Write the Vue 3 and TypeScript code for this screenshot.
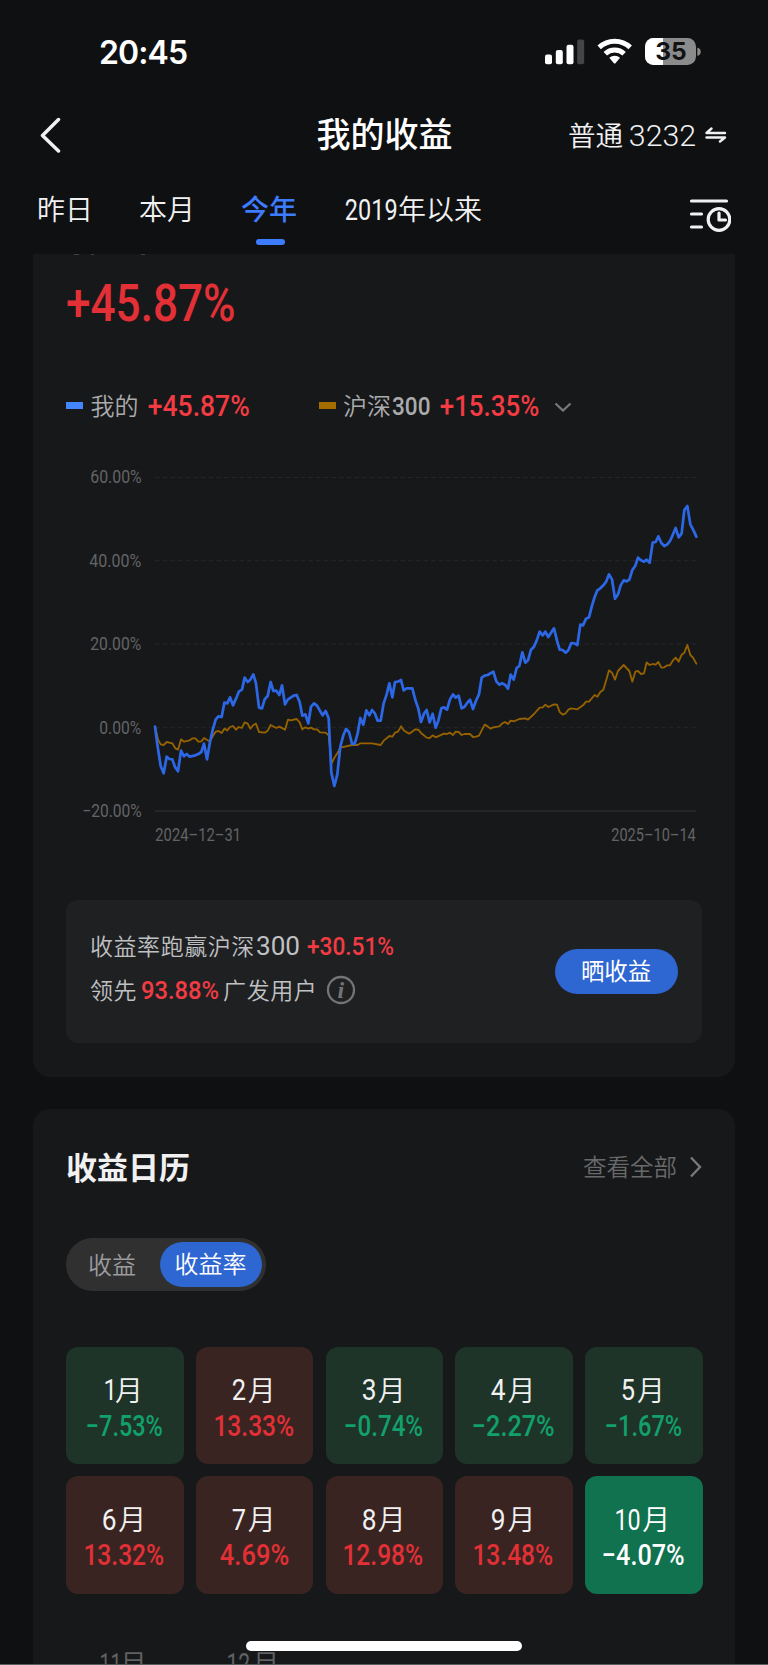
<script setup lang="ts">
import { h } from 'vue'

interface NumProps { t: string; w: number; c: number; b?: number }

// Condensed figures: w is the drawn width, c the cap height, b the weight.
// A leading or trailing "1" carries wider side bearings than the other digits.
const Num = (p: NumProps) => {
  const size = p.c / 0.711
  const lead = size * (p.t.startsWith('1') ? 0.09 : 0.04)
  const trail = size * (p.t.endsWith('1') ? 0.17 : 0.04)
  return h('svg', { width: p.w, height: p.c, style: { display: 'block', flex: 'none', overflow: 'visible' } }, [
    h('text', {
      x: -lead, y: p.c, fill: 'currentColor',
      'font-family': 'Roboto, sans-serif', 'font-size': size, 'font-weight': p.b ?? 400,
      textLength: p.w + lead + trail, lengthAdjust: 'spacingAndGlyphs',
    }, p.t),
  ])
}
Num.props = ['t', 'w', 'c', 'b']

const labels = [
  { t: '60.00%', w: 50 }, { t: '40.00%', w: 50.5 }, { t: '20.00%', w: 49.5 }, { t: '0.00%', w: 40.5 }, { t: '−20.00%', w: 58 },
]

const place = (dx: number, dy: number, pts: string) =>
  pts.trim().split(/\s+/).map((p) => {
    const [x, y] = p.split(',').map(Number)
    return `${x + dx},${y + dy}`
  }).join(' ')

const mine = place(-285, 487, `285,262 292,315 302,380 311,402 320,352 328,359 337,360 345,383 354,396 363,334 372,351 380,344 389,352 406,348 415,344 424,338 432,313 441,360 450,308 458,272 467,241 475,231 485,233 493,190 502,192 510,174 519,198 528,178 537,156 546,151 554,115 563,128 571,121 580,105 588,132 597,205 606,207 614,180 623,170 632,128 640,155 649,154 658,167 666,138 675,195 684,180 701,169 710,167 719,188 727,229 736,225 745,252 753,202 762,192 771,199 788,228 797,215 806,237 814,400 823,440 832,405 841,322 850,288 858,269 867,278 876,313 884,314 893,282 901,236 910,256 919,213 928,228 936,212 945,223 953,244 962,244 971,192 980,165 988,132`)
  + ' ' + place(705, 7, `7,654 15,608 24,607 33,602 41,633 50,627 67,627 76,662 85,688 93,728 102,703 110,692 119,729 128,703 137,745 145,724 154,687 162,684 171,691 180,660 189,645 197,655 206,649 215,687 223,683 232,670 240,661 249,689 258,664 267,645 275,595 284,589 293,587 310,577 319,606 328,616 336,612 345,616 354,628 362,586 371,601 380,566 388,560 397,519 406,550 414,543 423,511 432,502 440,484 449,457 458,468 466,457 475,473 484,459 492,447 501,484 509,511 518,512 527,520 535,513 544,491 553,492 562,497 571,436 579,438 588,418 597,414 606,379 614,353 622,333 631,327 640,318 649,306 657,285 666,300 675,358 684,345 692,318 701,303 710,306 718,301 727,272 736,259 744,235 753,243 762,247 770,241 779,250 788,190 797,188 805,171 814,191 823,200 832,195 840,185 849,165 857,146 866,174 875,162 883,92 892,80 901,135 909,150 919,172`)

const index = place(-285, 487, `285,262 294,300 302,315 311,317 320,308 337,312 346,327 354,331 363,300 372,307 389,303 398,297 406,297 415,307 424,306 432,296 450,307 458,291 467,277 476,275 485,281 493,268 502,273 510,263 519,260 528,271 536,263 545,266 554,249 563,253 571,268 580,257 588,253 597,278 614,280 623,274 632,257 649,266 658,262 675,271 684,241 692,243 710,239 719,249 727,270 736,264 745,268 753,265 762,270 771,270 780,279 797,280 806,288 815,372 823,355 832,342 841,325 858,321 876,317 893,317 901,312 936,312 962,317 971,304 988,290`)
  + ' ' + place(705, 7, `7,772 15,760 24,757 33,741 41,753 50,759 58,763 76,750 85,751 93,761 110,775 119,776 128,768 137,774 162,763 171,764 180,760 189,767 197,757 206,758 215,767 223,764 240,764 249,773 258,772 267,769 275,753 284,736 293,741 301,748 310,744 328,741 336,733 345,728 354,734 362,724 371,726 388,719 406,717 414,721 432,704 449,685 458,684 466,676 475,683 492,675 501,676 509,698 518,706 527,702 535,691 544,687 562,690 579,678 588,667 597,667 614,647 622,652 631,638 640,631 649,601 657,573 666,580 675,601 684,575 701,557 718,575 727,607 736,577 744,575 753,584 762,582 770,549 779,557 788,554 797,556 805,548 814,565 823,564 832,558 840,558 849,543 857,535 866,547 875,526 883,520 892,497 901,527 909,535 919,553`)

const months = [
  { m: '1', mw: 6, v: '−7.53%', w: 74.7, k: 'down' },
  { m: '2', mw: 12, v: '13.33%', w: 77, k: 'up' },
  { m: '3', mw: 12.5, v: '−0.74%', w: 77, k: 'down' },
  { m: '4', mw: 12.5, v: '−2.27%', w: 80.5, k: 'down' },
  { m: '5', mw: 12, v: '−1.67%', w: 75, k: 'down' },
  { m: '6', mw: 12.5, v: '13.32%', w: 77, k: 'up' },
  { m: '7', mw: 12, v: '4.69%', w: 67, k: 'up' },
  { m: '8', mw: 12.5, v: '12.98%', w: 77, k: 'up' },
  { m: '9', mw: 12.5, v: '13.48%', w: 77, k: 'up' },
  { m: '10', mw: 22.5, v: '−4.07%', w: 80.5, k: 'now' },
]
</script>

<template>
  <div class="screen">
    <div class="status">
      <span class="time">20:45</span>
      <svg class="sys" width="158" height="30" viewBox="0 0 158 30">
        <g fill="#fff">
          <rect x="1" y="17.5" width="7" height="9.7" rx="2" />
          <rect x="11.8" y="13" width="7" height="14.2" rx="2" />
          <rect x="22.5" y="7.8" width="7" height="19.4" rx="2" />
          <rect x="33.2" y="2.5" width="7" height="24.7" rx="2" fill="#454547" />
        </g>
        <g fill="none" stroke="#fff" stroke-width="5">
          <path d="M55.2 10.4a22.5 22.5 0 0 1 31 0" />
          <path d="M61.3 16.7a13.6 13.6 0 0 1 18.8 0" />
        </g>
        <path d="M65.3 20.8a8 8 0 0 1 10.8 0l-4.4 5.2q-1 1-2 0z" fill="#fff" />
        <clipPath id="batt"><rect x="101" y="1" width="51" height="27" rx="8.5" /></clipPath>
        <g clip-path="url(#batt)">
          <rect x="101" y="1" width="51" height="27" fill="#8b8b8c" />
          <rect x="101" y="1" width="18" height="27" fill="#fff" />
        </g>
        <path d="M153.3 10.6q3.4 1 3.4 4.2t-3.4 4.2z" fill="#8b8b8c" />
        <text x="127" y="23.3" text-anchor="middle" class="pct">35</text>
      </svg>
    </div>

    <header class="nav">
      <svg class="back" width="22" height="36" viewBox="0 0 22 36"><path d="M18.500 2.500 2.500 18.500l16 15.500" /></svg>
      <h1>我的收益</h1>
      <div class="account">
        <span>普通</span>
        <Num t="3232" :w="65" :c="20.7" :b="300" />
        <svg width="22" height="16" viewBox="0 0 22 16"><path d="M6.500 1.500 1.500 6h18.500M1.500 10.500h18.500L15 14.500" /></svg>
      </div>
    </header>

    <nav class="tabs">
      <span class="tab">昨日</span>
      <span class="tab">本月</span>
      <span class="tab on">今年</span>
      <span class="tab since"><Num t="2019" :w="50.500" :c="20.5" />年以来</span>
      <svg class="filter" width="42" height="34" viewBox="0 0 42 34">
        <path d="M2.500 3h35M2.500 16h10M2.500 29h10" />
        <circle cx="30" cy="21.500" r="10.800" />
        <path d="M30 15v7h6.500" />
      </svg>
    </nav>

    <section class="card first">
      <svg class="peek" width="80" height="2" viewBox="0 0 80 2"><path d="M8 .5h5M25 .5h3M75 .5h4" /></svg>
      <div class="total"><Num t="+45.87%" :w="165.5" :c="36.3" :b="500" /></div>

      <div class="legend">
        <i class="dash blue"></i><span class="cn name">我的</span>
        <Num class="red" t="+45.87%" :w="99.5" :c="21.5" :b="500" />
        <i class="dash gold"></i><span class="cn name">沪深</span>
        <Num class="n300" t="300" :w="36.5" :c="17.7" :b="500" />
        <Num class="red" t="+15.35%" :w="97" :c="21.5" :b="500" />
        <svg class="caret" width="18" height="10" viewBox="0 0 18 10"><path d="M1.500 1.500 9 8.500l7.500-7" /></svg>
      </div>

      <div class="chart">
        <div class="axis">
          <Num v-for="l in labels" :key="l.t" :t="l.t" :w="l.w" :c="12.8" />
        </div>
        <div class="plot">
          <svg class="curves" width="541" height="334.500" viewBox="0 0 1623 1003.500">
            <path class="grid" d="M0 1.500H1623M0 251H1623M0 501H1623M0 752H1623" />
            <path class="base" d="M0 1002H1623" />
            <polyline class="index" :points="index" />
            <polyline class="mine" :points="mine" />
          </svg>
          <div class="dates">
            <Num t="2024–12–31" :w="82" :c="12.8" />
            <Num t="2025–10–14" :w="83" :c="12.8" />
          </div>
        </div>
      </div>

      <div class="promo">
        <div>
          <div class="line">
            <span class="cn sp">收益率跑赢沪深</span><Num class="g" t="300" :w="42" :c="18" />
            <Num class="red l9" t="+30.51%" :w="85" :c="18.7" :b="500" />
          </div>
          <div class="line">
            <span class="cn sp">领先</span><Num class="red l5" t="93.88%" :w="76" :c="18.7" :b="500" />
            <span class="cn sp l5b">广发用户</span>
            <svg class="info" width="30" height="30" viewBox="0 0 30 30">
              <circle cx="15" cy="15" r="13" />
              <text x="14.800" y="22.500" text-anchor="middle">i</text>
            </svg>
          </div>
        </div>
        <button class="share">晒收益</button>
      </div>
    </section>

    <section class="card second">
      <div class="head">
        <h2>收益日历</h2>
        <span class="all">查看全部</span>
        <svg width="13" height="22" viewBox="0 0 13 22"><path d="M2 1.500 11 11l-9 9.500" /></svg>
      </div>
      <div class="toggle"><span class="off">收益</span><span class="sel">收益率</span></div>
      <div class="months">
        <div v-for="x in months" :key="x.m" class="tile" :class="x.k">
          <div class="mon"><Num :t="x.m" :w="x.mw" :c="20.5" /><span>月</span></div>
          <Num class="val" :t="x.v" :w="x.w" :c="20.5" :b="500" />
        </div>
        <div class="tile next"><div class="mon"><Num t="11" :w="14.500" :c="20.5" /><span>月</span></div></div>
        <div class="tile next"><div class="mon"><Num t="12" :w="20" :c="20.5" /><span>月</span></div></div>
      </div>
    </section>
    <div class="home"></div>
    <div class="edge"></div>
  </div>
</template>

<style>
body { margin: 0; background: #0f1012; }
</style>

<style scoped>
* { box-sizing: border-box; }
.screen { position: relative; width: 768px; height: 1665px; overflow: hidden; background: #0f1012; color: #f1f1f2; font-family: "Noto Sans CJK SC", sans-serif; }
svg { flex: none; display: block; }
.status { display: flex; height: 96px; padding: 37px 66px 0 99px; }
.time { flex: 1; font: 600 32px/32px Inter, sans-serif; letter-spacing: -.9px; color: #fff; }
.pct { font: 700 24.500px Inter, sans-serif; fill: #111214; }
.nav { display: flex; align-items: center; height: 78px; padding: 0 41px 0 40px; }
.back path { fill: none; stroke: #f1f1f2; stroke-width: 3.500; stroke-linecap: round; stroke-linejoin: round; }
h1 { flex: 1; margin: 0 0 0 254.500px; font-size: 34px; line-height: 40px; font-weight: 500; color: #fff; transform: translateY(-2px); }
.account { display: flex; align-items: center; font-size: 27.500px; line-height: 40px; font-weight: 350; }
.account span { width: 62px; transform: translateY(-1px); }
.account svg:last-child { margin-left: 10px; }
.account path { fill: none; stroke: #f1f1f2; stroke-width: 2.400; stroke-linecap: round; stroke-linejoin: round; }
.tabs { display: flex; height: 80px; padding: 14px 37px 0 37px; font-size: 28px; line-height: 40px; font-weight: 350; }
.tab { width: 102px; height: 40px; }
.on { position: relative; color: #3d7bff; font-weight: 500; width: 104.500px; }
.on::after { content: ""; position: absolute; left: 15px; top: 51px; width: 29px; height: 6px; border-radius: 3px; background: #3d7bff; }
.since { display: flex; align-items: center; flex: 1; gap: 2px; }
.since svg { margin-top: 2px; }
.filter { margin-top: 10px; }
.filter path, .filter circle { fill: none; stroke: #f1f1f2; stroke-width: 3.200; stroke-linecap: round; stroke-linejoin: round; }
.card { width: 702px; margin-left: 33px; padding: 0 33px; background: #17181a; }
.first { height: 822.500px; border-radius: 0 0 17px 17px; }
.peek path { stroke: #3f4043; stroke-width: 1; }
.total { margin-left: 2px; padding-top: 28.500px; height: 120px; color: #e23036; }
.legend { display: flex; align-items: center; height: 60px; }
.cn { font-weight: 350; white-space: nowrap; }
.name { font-size: 24px; line-height: 40px; color: #aaabad; width: 58.500px; transform: translateY(-1.500px); }
.gold + .name { width: 50px; }
.dash { width: 17px; height: 6.500px; margin: -1px 7.500px 0 0; }
.blue { background: #4486ff; }
.gold { background: #a56c00; margin-left: 70px; }
.red { color: #f23b42; }
.legend .red { margin-top: -3px; }
.n300 { color: #aaabad; margin: 0 11px 0 0; }
.caret { margin: 1px 0 0 16px; }
.caret path { fill: none; stroke: #77787a; stroke-width: 2.300; }
.chart { display: flex; margin-top: 41px; }
.axis { display: flex; flex-direction: column; align-items: flex-end; justify-content: space-between; width: 74.500px; height: 347px; margin: -7px 14.500px 0 0; color: #636466; }
.curves { overflow: visible; }
.grid { fill: none; stroke: #25262a; stroke-width: 3; stroke-dasharray: 14 9; }
.base { stroke: #2a2b2d; stroke-width: 4; }
.mine, .index { fill: none; stroke: #2c68e6; stroke-width: 8.200; stroke-linejoin: round; stroke-linecap: round; }
.index { stroke: #966200; stroke-width: 5.500; }
.dates { display: flex; justify-content: space-between; padding: 16px 1px 0 1px; color: #636466; }
.promo { display: flex; justify-content: space-between; width: 636px; height: 143.500px; margin-top: 59.500px; padding: 24px 24px 0 24px; border-radius: 12px; background: #1f2022; }
.line { display: flex; align-items: center; height: 44px; color: #c0c1c3; }
.sp { font-size: 23px; line-height: 40px; letter-spacing: .55px; transform: translateY(-1.500px); }
.g { margin-left: 2px; }
.line .red { margin-top: -1px; }
.l9 { margin-left: 9.500px; }
.l5 { margin-left: 5px; }
.l5b { margin-left: 5px; }
.info { margin-left: 9px; }
.info circle { fill: none; stroke: #737476; stroke-width: 2.300; }
.info text { font: italic bold 24px "Liberation Serif", serif; fill: #737476; }
.share { width: 123px; height: 45px; margin-top: 25px; padding: 0 1px 2px 0; border: 0; border-radius: 23px; background: #2e66d2; color: #fff; font: 400 23.400px/40px "Noto Sans CJK SC", sans-serif; }
.second { margin-top: 32.500px; height: 600px; padding-top: 28px; border-radius: 17px 17px 0 0; }
.head { display: flex; align-items: center; height: 60px; }
h2 { flex: 1; margin: 0; font-size: 31px; line-height: 40px; font-weight: 700; transform: translateY(-1px); }
.all { margin-right: 12px; font-size: 23.500px; line-height: 40px; font-weight: 350; color: #68696b; transform: translateY(-1.500px); }
.head path { fill: none; stroke: #77787a; stroke-width: 2.400; }
.toggle { display: flex; align-items: center; width: 200px; height: 53px; margin-top: 41px; padding: 0 4px 0 22px; border-radius: 27px; background: #303031; font-size: 24px; font-weight: 350; line-height: 40px; }
.off { width: 72px; color: #9b9c9e; transform: translateY(-1px); }
.sel { width: 102px; height: 45px; padding: 1px 1px 0 0; border-radius: 23px; background: #2e66d2; color: #fff; text-align: center; }
.months { display: grid; grid-template-columns: repeat(5, 117.500px); column-gap: 12.250px; row-gap: 12px; margin-top: 55.500px; }
.tile { display: flex; flex-direction: column; align-items: center; height: 117.500px; padding-top: 23px; border-radius: 12px; }
.mon { display: flex; align-items: center; justify-content: center; gap: 2.500px; height: 40px; font-size: 28px; line-height: 40px; font-weight: 350; }
.mon span { transform: translateY(-1.500px); }
.val { margin: 5px 1px 0 0; }
.down { background: #1e3428; }
.up { background: #3a2421; }
.now { background: #10724f; }
.down .val { color: #12a06c; }
.up .val { color: #e23036; }
.now .val, .now { color: #fff; }
.next { color: #606163; padding-top: 38px; }
.home { position: absolute; left: 246px; top: 1641px; width: 276px; height: 10px; border-radius: 5px; background: #fff; }
.edge { position: absolute; left: 0; bottom: 0; width: 768px; height: 1px; background: #5c5d60; }
</style>
